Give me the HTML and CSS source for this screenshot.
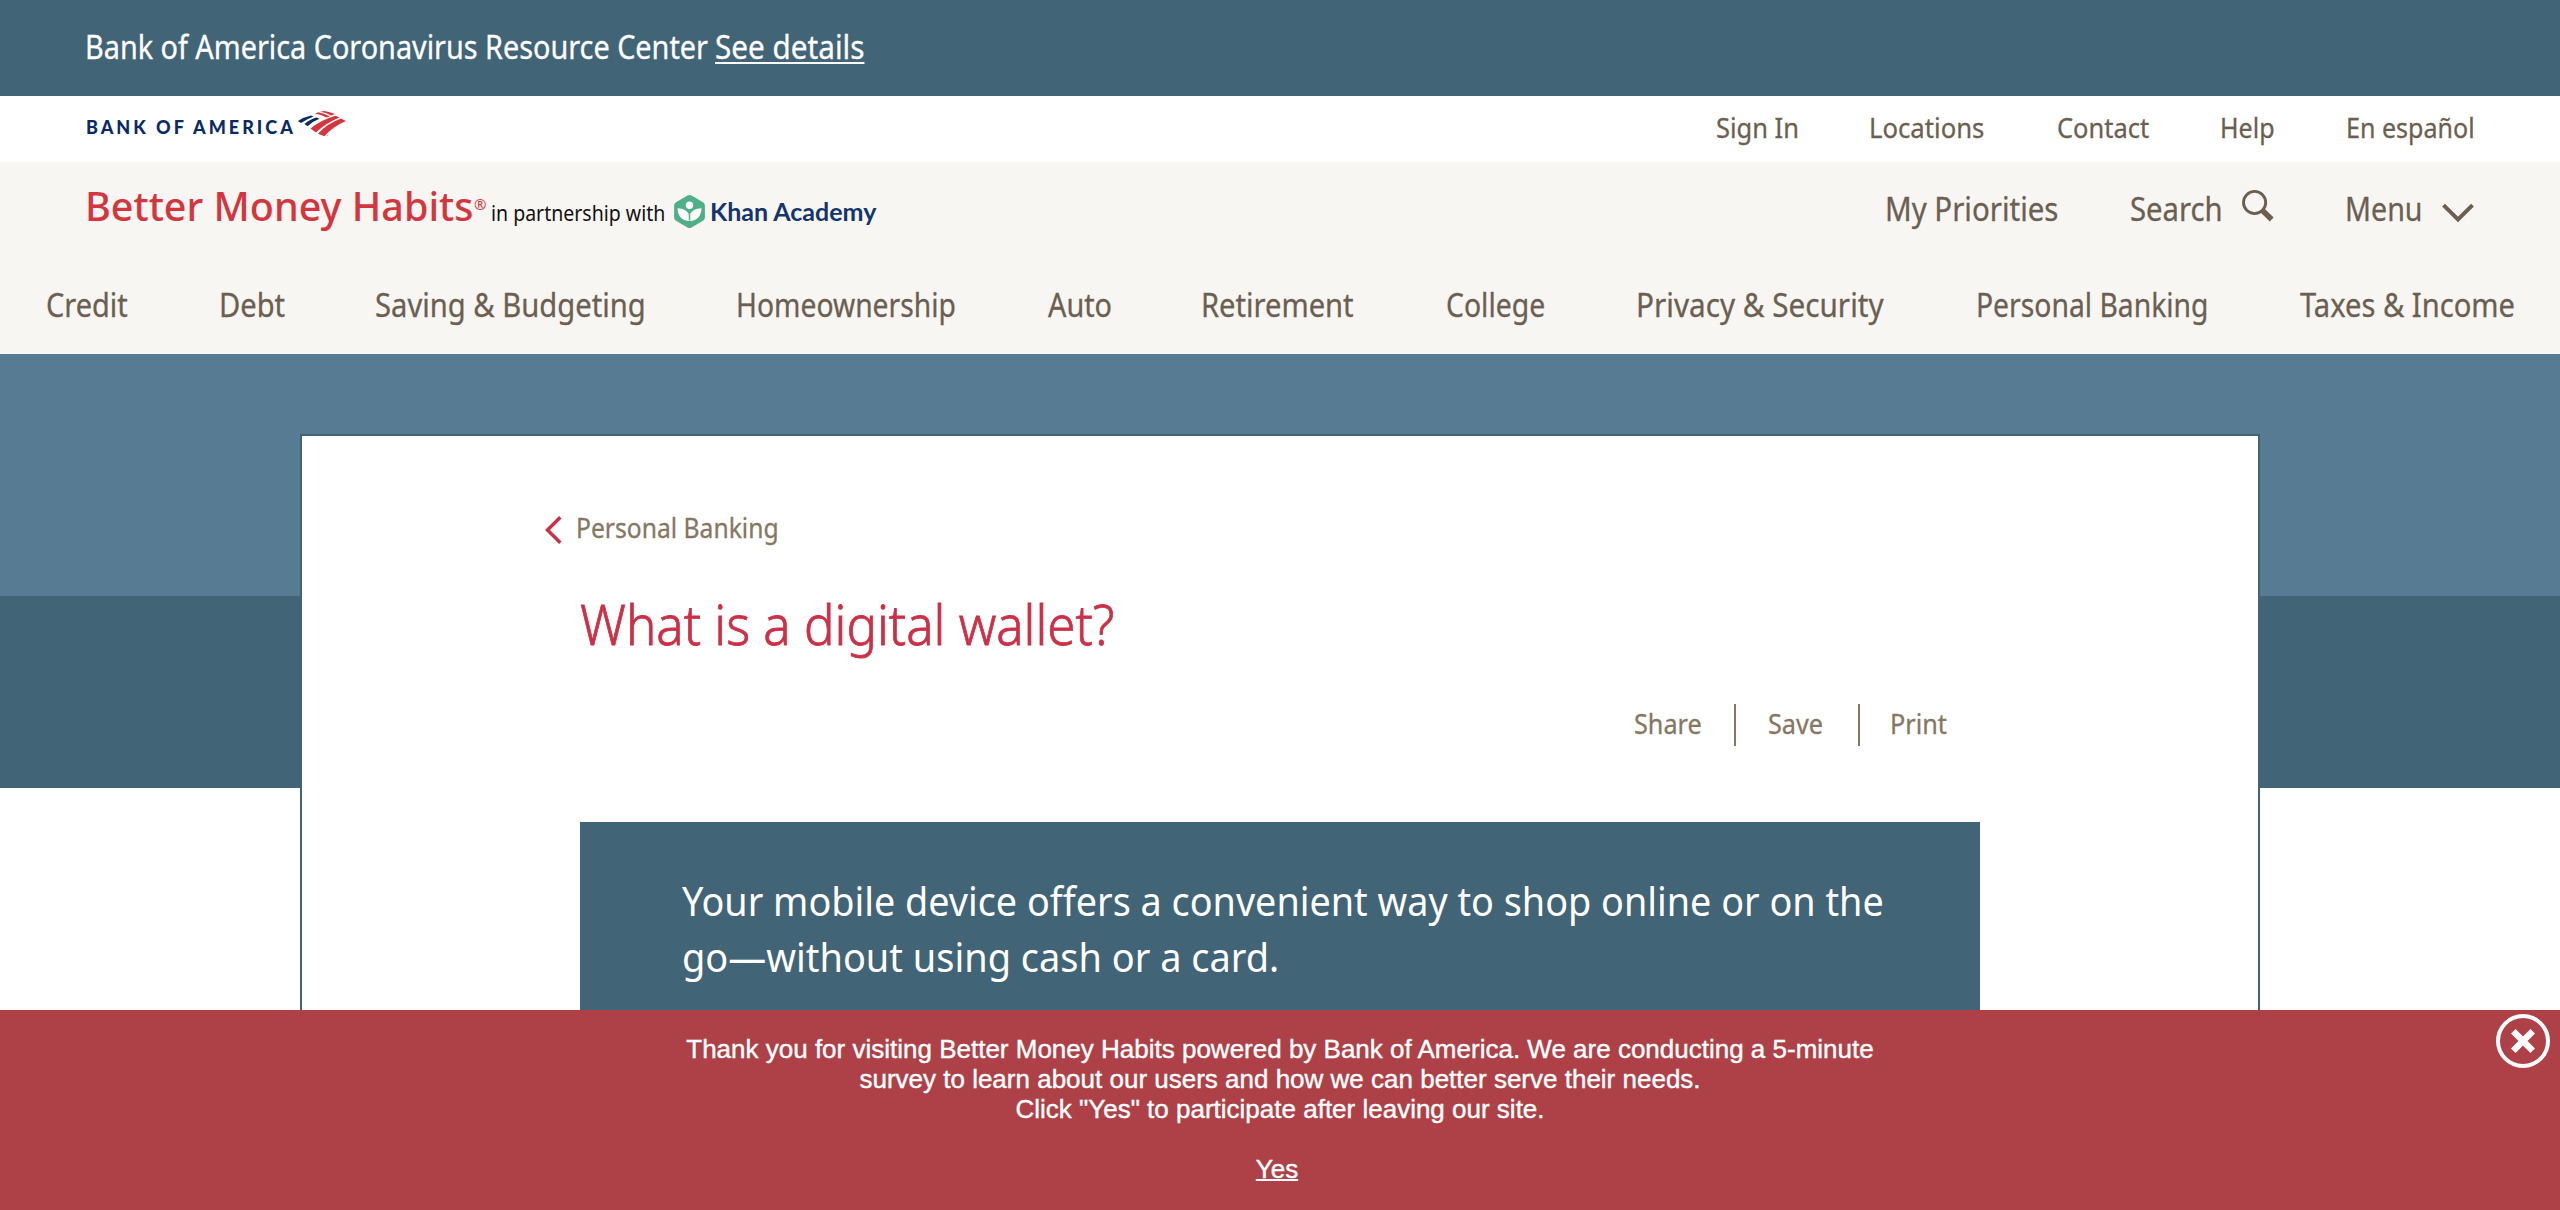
FILE: index.html
```html
<!DOCTYPE html>
<html lang="en">
<head>
<meta charset="utf-8">
<title>What is a digital wallet?</title>
<link rel="stylesheet" href="styles.css">
</head>
<body>
<div class="notice">
  <span class="fit">Bank of America Coronavirus Resource Center</span>
  <a class="fit" href="#">See details</a>
</div>

<header>
  <div class="utility">
    <a class="bank" href="#">
      <span class="bank-name">BANK OF AMERICA</span>
      <svg class="flag" viewBox="0 0 48 26" aria-hidden="true">
        <path fill="#0a2a66" d="M0 10Q6 6 13 4.5L15.500 5.500Q9 8 3 12ZM6.500 13Q12 8 18.500 6.500L21.500 7.700Q15 10 9.500 15.300Z"/>
        <path fill="#d4363f" d="M17 2.500L20.500 1.300Q27 2.500 32 5.600L28.500 6.600Q23 3.500 17 2.500ZM22 .8L26.500 0Q32 1 37 3L33 4.400Q28 1.500 22 .8ZM12.500 17.500Q22 9.300 37.500 4.700L41.500 6.600Q28 12 18 21.500ZM20 22.800Q29 12.500 43 7.500L48 10Q35 15.500 26.500 25.200Z"/>
        <circle cx="29.500" cy="24.500" r=".8" fill="#e9a3a6"/>
      </svg>
    </a>
    <nav class="utility-links">
      <a class="fit" href="#">Sign In</a>
      <a class="fit" href="#">Locations</a>
      <a class="fit" href="#">Contact</a>
      <a class="fit" href="#">Help</a>
      <a class="fit" href="#">En español</a>
    </nav>
  </div>

  <div class="brand-row">
    <div class="brand">
      <a class="bmh fit" href="#">Better Money Habits</a><span class="reg">®</span>
      <span class="partner fit">in partnership with</span>
      <svg class="khan-mark" viewBox="0 0 31 33" aria-hidden="true">
        <path fill="#4faf8a" d="M13.500.6a4 4 0 0 1 4 0l11.500 6.600a4 4 0 0 1 1.900 3.400v11.800a4 4 0 0 1-1.900 3.400l-11.500 6.600a4 4 0 0 1-4 0L2 25.800a4 4 0 0 1-1.900-3.400V10.600A4 4 0 0 1 2 7.200Z"/>
        <circle cx="15.500" cy="10.300" r="3.700" fill="#fff"/>
        <path fill="#fff" d="M3.500 13.200C9 13.400 13.500 15.300 15.500 20.500C17.500 15.300 22 13.400 27.500 13.200C27.500 20 23.500 26 15.500 26S3.500 20 3.500 13.200Z"/>
        <path stroke="#4faf8a" stroke-width="1.500" d="M15.500 19v6.500"/>
      </svg>
      <span class="khan">Khan Academy</span>
    </div>
    <nav class="tools">
      <a class="fit" href="#">My Priorities</a>
      <a class="fit" href="#">Search</a>
      <svg class="search-icon" viewBox="0 0 32 33" aria-hidden="true">
        <circle cx="12.600" cy="13.500" r="11.100" fill="none" stroke="#6b5f52" stroke-width="2.900"/>
        <path stroke="#6b5f52" stroke-width="5.500" d="M20.500 21.500L29.700 30.500"/>
      </svg>
      <a class="fit" href="#">Menu</a>
      <svg class="menu-icon" viewBox="0 0 32 20" aria-hidden="true">
        <path fill="none" stroke="#6b5f52" stroke-width="4" d="M1.500 2.200L16 16.500L30.500 2.200"/>
      </svg>
    </nav>
  </div>

  <nav class="topics">
    <a class="fit" href="#">Credit</a>
    <a class="fit" href="#">Debt</a>
    <a class="fit" href="#">Saving &amp; Budgeting</a>
    <a class="fit" href="#">Homeownership</a>
    <a class="fit" href="#">Auto</a>
    <a class="fit" href="#">Retirement</a>
    <a class="fit" href="#">College</a>
    <a class="fit" href="#">Privacy &amp; Security</a>
    <a class="fit" href="#">Personal Banking</a>
    <a class="fit" href="#">Taxes &amp; Income</a>
  </nav>
</header>

<main>
  <article class="card">
    <a class="crumb" href="#">
      <svg class="back-icon" viewBox="0 0 17 28" aria-hidden="true">
        <path fill="none" stroke="#cc3047" stroke-width="3.500" d="M15.300 1.300L2.500 14L15.300 26.700"/>
      </svg>
      <span class="fit">Personal Banking</span>
    </a>
    <h1 class="fit">What is a digital wallet?</h1>
    <div class="actions">
      <a href="#"><span class="fit">Share</span></a>
      <a href="#"><span class="fit">Save</span></a>
      <a href="#"><span class="fit">Print</span></a>
    </div>
    <p class="intro">
      <span class="fit">Your mobile device offers a convenient way to shop online or on the</span>
      <span class="fit">go—without using cash or a card.</span>
    </p>
  </article>
</main>

<aside class="survey">
  <p>Thank you for visiting Better Money Habits powered by Bank of America. We are conducting a 5-minute<br>survey to learn about our users and how we can better serve their needs.<br>Click "Yes" to participate after leaving our site.</p>
  <a class="yes" href="#">Yes</a>
  <svg class="close" viewBox="0 0 54 54" role="img" aria-label="Close">
    <circle cx="27" cy="27" r="25" fill="none" stroke="#fff" stroke-width="4"/>
    <path stroke="#fff" stroke-width="6.500" d="M17.300 17.300L36.700 36.700M36.700 17.300L17.300 36.700"/>
  </svg>
</aside>
</body>
</html>
```
FILE: styles.css
```css
* {
  box-sizing: border-box;
}

body {
  margin: 0;
  height: 1210px;
  overflow: hidden;
  background: #fff;
  color: #6b5f52;
  font-family: "Noto Sans", "Open Sans", sans-serif;
}

a {
  color: inherit;
  text-decoration: none;
}

/* Condenses a label horizontally; --fit is the width ratio */
.fit {
  display: block;
  white-space: nowrap;
  transform: scaleX(var(--fit, 0.91));
  transform-origin: 0 50%;
}

.notice .fit,
.utility-links .fit,
.tools .fit,
.topics .fit {
  -webkit-text-stroke: 0.3px currentColor;
}

/* Notice */
.notice {
  display: grid;
  grid-template-columns: 630px 1fr;
  height: 96px;
  padding-left: 85px;
  background: #416477;
  color: #fff;
  font-size: 32px;
  line-height: 93px;
}

.notice span { --fit: 0.9; }

.notice a {
  --fit: 0.928;
  justify-self: start;
  text-decoration: underline;
  text-decoration-thickness: 2px;
  text-underline-offset: 3px;
}

/* Utility row */
.utility {
  display: flex;
  justify-content: space-between;
  height: 66px;
  padding-left: 86px;
}

.bank {
  display: flex;
  align-items: flex-start;
  color: #0a2a66;
}

.bank-name {
  width: 212px;
  font: 900 18px/62px Lato, sans-serif;
  letter-spacing: 3px;
  white-space: nowrap;
}

.flag {
  width: 48px;
  height: 26px;
  margin-top: 15px;
}

.utility-links {
  display: grid;
  grid-template-columns: 153px 188px 163px 126px 214px;
  font-size: 28px;
  line-height: 63px;
}

.utility-links :nth-child(2) { --fit: 0.918; }
.utility-links :nth-child(4) { --fit: 0.895; }
.utility-links :nth-child(5) { --fit: 0.895; }

/* Brand row */
.brand-row {
  display: flex;
  justify-content: space-between;
  height: 91px;
  padding-left: 85px;
  background: #f8f6f2;
}

.brand {
  display: grid;
  grid-template-columns: 389px 17px 183px 36px auto;
  align-items: baseline;
  padding-top: 13.5px;
}

.bmh {
  --fit: 0.988;
  color: #d4363f;
  font-size: 40px;
  font-weight: 500;
  line-height: 60px;
}

.reg {
  color: #d4363f;
  font-size: 15px;
  line-height: 15px;
  transform: translateY(-11px);
}

.partner {
  --fit: 0.929;
  color: #111;
  font-size: 21px;
}

.khan-mark {
  align-self: start;
  width: 31px;
  height: 33px;
  margin-top: 19.500px;
}

.khan {
  color: #14346e;
  font: 700 25px Lato, sans-serif;
  white-space: nowrap;
}

.tools {
  display: grid;
  grid-template-columns: 245px 112px 103px 97px 118px;
  font-size: 32px;
  line-height: 93px;
}

.tools :nth-child(1) { --fit: 0.92; }
.tools :nth-child(2) { --fit: 0.915; }
.tools :nth-child(4) { --fit: 0.895; }

.search-icon {
  width: 32px;
  height: 33px;
  margin-top: 27px;
}

.menu-icon {
  width: 32px;
  height: 20px;
  margin-top: 41px;
}

/* Topics */
.topics {
  display: grid;
  grid-template-columns: 173px 156px 361px 312px 153px 245px 190px 340px 324px 1fr;
  height: 101px;
  padding-left: 46px;
  background: #f8f6f2;
  font-size: 32px;
  line-height: 103px;
}

.topics :nth-child(1) { --fit: 0.905; }
.topics :nth-child(2) { --fit: 0.91; }
.topics :nth-child(3) { --fit: 0.912; }
.topics :nth-child(4) { --fit: 0.883; }
.topics :nth-child(5) { --fit: 0.9; }
.topics :nth-child(7) { --fit: 0.886; }
.topics :nth-child(8) { --fit: 0.928; }
.topics :nth-child(9) { --fit: 0.884; }

/* Article */
main {
  height: 856px;
  padding: 80px 300px 0;
  background: linear-gradient(#567b92 242px, #416477 242px 434px, #fff 434px);
}

.card {
  height: 776px;
  padding: 71.5px 278px 0;
  border: 2px solid #416477;
  background: #fff;
}

.crumb {
  display: flex;
  align-items: center;
  gap: 14px;
  height: 40px;
  margin-left: -35px;
  color: #857764;
  font-size: 27px;
  line-height: 40px;
}

.crumb .fit {
  --fit: 0.913;
  -webkit-text-stroke: 0.3px currentColor;
}

.back-icon {
  width: 17px;
  height: 28px;
  margin-top: 4px;
}

h1 {
  --fit: 0.911;
  margin: 37px 0 0;
  color: #cc3047;
  font-size: 56px;
  font-weight: 300;
  line-height: 76px;
  -webkit-text-stroke: 0.8px currentColor;
}

.actions {
  display: grid;
  grid-template-columns: 100px 124px 122px;
  justify-content: end;
  height: 42px;
  margin: 43.5px 0 76px;
  color: #857764;
  font-size: 27px;
  line-height: 40px;
}

.actions a + a {
  padding-left: 32px;
  border-left: 2px solid #857764;
}

.actions a:last-child {
  padding-left: 30px;
}

.actions .fit {
  --fit: 0.935;
  -webkit-text-stroke: 0.3px currentColor;
}

.intro {
  height: 400px;
  margin: 0;
  padding: 50.5px 102px 0;
  background: #426477;
  color: #fff;
  font-size: 40px;
  font-weight: 400;
  line-height: 56px;
}

.intro .fit { --fit: 0.944; }
.intro .fit + .fit { --fit: 0.948; }

/* Survey bar, pinned over the page */
.survey {
  position: fixed;
  inset: auto 0 0;
  height: 200px;
  padding-top: 24px;
  background: #ad4147;
  color: #fff;
  font: 26px/30px "Liberation Sans", Arial, sans-serif;
  text-align: center;
  -webkit-text-stroke: 0.4px currentColor;
}

.survey p {
  margin: 0 0 30px;
}

.yes {
  margin-right: 6px;
  text-decoration: underline;
  text-decoration-thickness: 2px;
}

.close {
  position: absolute;
  top: 4px;
  right: 10px;
  width: 54px;
  height: 54px;
}
```
